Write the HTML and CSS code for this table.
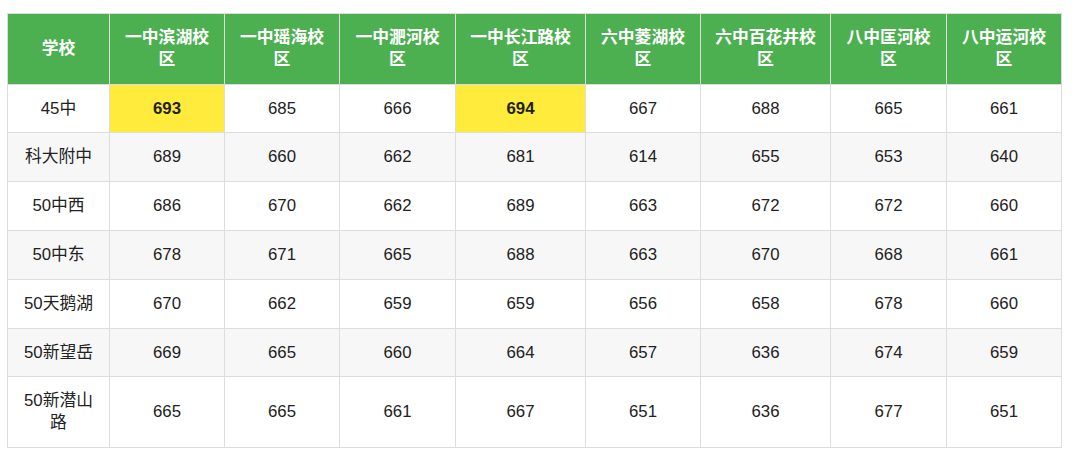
FILE: index.html
```html
<!DOCTYPE html>
<html lang="zh-CN">
<head>
<meta charset="utf-8">
<title>分数线</title>
<link rel="stylesheet" href="styles.css">
</head>
<body>
<table class="score-table">
  <colgroup>
    <col class="c-school">
    <col class="c115">
    <col class="c115">
    <col class="c116">
    <col class="c130">
    <col class="c115">
    <col class="c130">
    <col class="c116">
    <col class="c115">
  </colgroup>
  <thead>
    <tr>
      <th>学校</th>
      <th>一中滨湖校区</th>
      <th>一中瑶海校区</th>
      <th>一中淝河校区</th>
      <th>一中长江路校区</th>
      <th>六中菱湖校区</th>
      <th>六中百花井校区</th>
      <th>八中匡河校区</th>
      <th>八中运河校区</th>
    </tr>
  </thead>
  <tbody>
    <tr><td>45中</td><td class="hl">693</td><td>685</td><td>666</td><td class="hl">694</td><td>667</td><td>688</td><td>665</td><td>661</td></tr>
    <tr><td>科大附中</td><td>689</td><td>660</td><td>662</td><td>681</td><td>614</td><td>655</td><td>653</td><td>640</td></tr>
    <tr><td>50中西</td><td>686</td><td>670</td><td>662</td><td>689</td><td>663</td><td>672</td><td>672</td><td>660</td></tr>
    <tr><td>50中东</td><td>678</td><td>671</td><td>665</td><td>688</td><td>663</td><td>670</td><td>668</td><td>661</td></tr>
    <tr><td>50天鹅湖</td><td>670</td><td>662</td><td>659</td><td>659</td><td>656</td><td>658</td><td>678</td><td>660</td></tr>
    <tr><td>50新望岳</td><td>669</td><td>665</td><td>660</td><td>664</td><td>657</td><td>636</td><td>674</td><td>659</td></tr>
    <tr><td>50新潜山路</td><td>665</td><td>665</td><td>661</td><td>667</td><td>651</td><td>636</td><td>677</td><td>651</td></tr>
  </tbody>
</table>
</body>
</html>
```
FILE: styles.css
```css
html, body {
  margin: 0;
  padding: 0;
  background: #ffffff;
}
body {
  padding: 13px 0 0 7px;
  font-family: "Liberation Sans", "Noto Sans CJK SC", sans-serif;
  font-size: 16.8px;
  color: #222222;
}
.score-table {
  border-collapse: collapse;
  table-layout: fixed;
  width: 1054px;
}
.c-school { width: 102px; }
.c115 { width: 115px; }
.c116 { width: 116px; }
.c130 { width: 130px; }
.score-table th,
.score-table td {
  border: 1px solid #dddddd;
  padding: 13px 10px;
  line-height: 21.8px;
  text-align: center;
  vertical-align: middle;
}
.score-table th {
  background: #4caf50;
  color: #ffffff;
  font-weight: bold;
}
.score-table tbody tr:nth-child(even) td {
  background: #f7f7f7;
}
.score-table td.hl {
  background: #ffeb3b;
  font-weight: bold;
}
```
